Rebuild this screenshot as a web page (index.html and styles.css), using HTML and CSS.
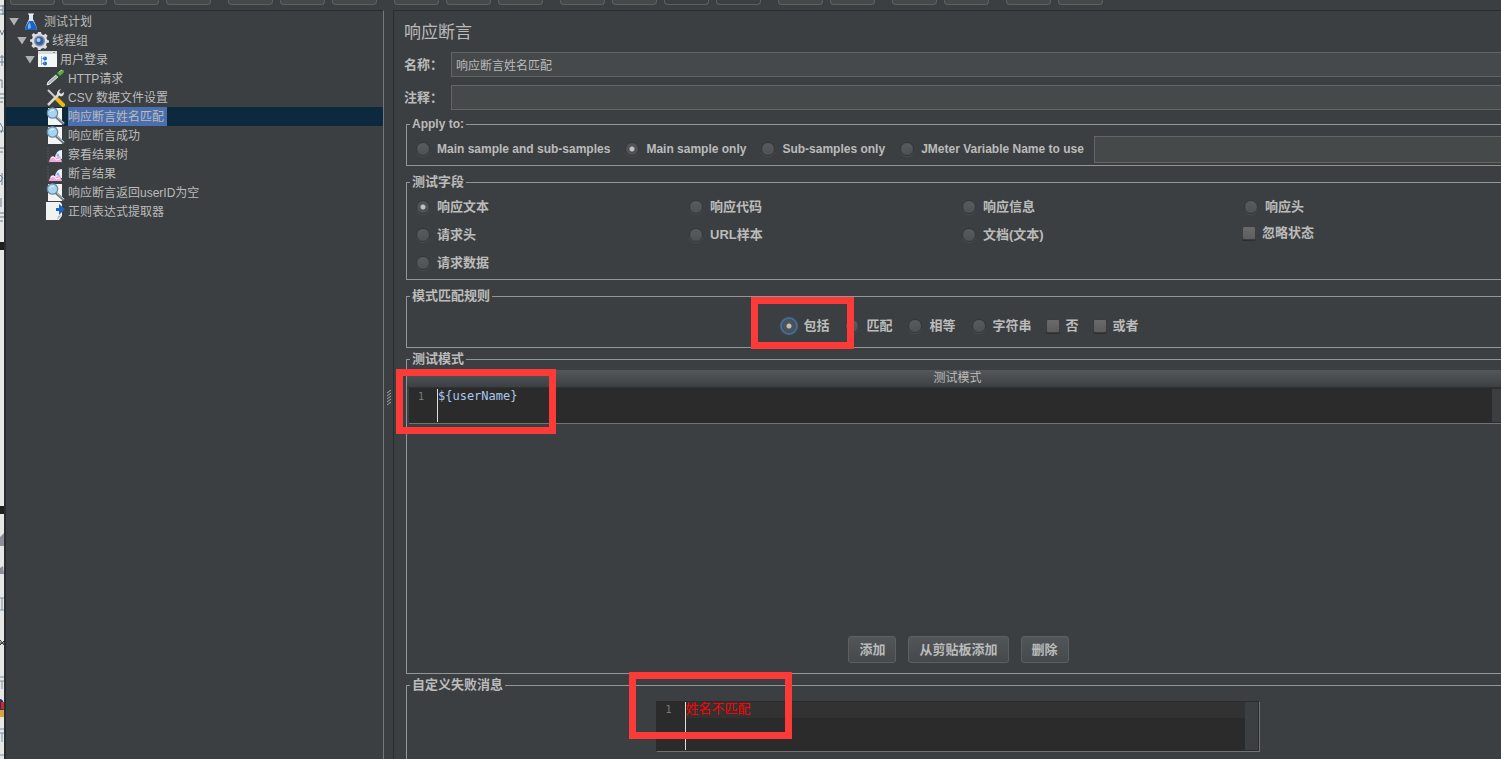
FILE: index.html
```html
<!DOCTYPE html>
<html lang="zh-CN">
<head>
<meta charset="utf-8">
<title>响应断言</title>
<link rel="stylesheet" href="styles.css">
</head>
<body>
<svg class="backdrop" width="4" height="759" viewBox="0 0 4 759" aria-hidden="true">
  <rect width="4" height="759" fill="#e6e6e4"/>
  <g fill="#1f1f1f"><rect y="242" width="4" height="8"/><rect y="506" width="4" height="8"/></g>
  <g stroke="#6a7f96" fill="none"><path d="M0 6h4M0 10h3M0 14h4M3 5v10M0 30l2 5 2-5M0 57h4M0 62h4M2 55v11M0 80h2v8M0 94h4M0 98h4M0 102h3M0 123l3 5-2 5M0 131h4M0 148h4M0 152h3M0 175l3 3-3 4M2 173v12M1 198v9M0 213h4M0 217h4M0 221h3"/></g>
  <g fill="#8c8d99"><path d="M4 533v13H0v-9zM0 568l3-2 1 8H0z"/></g>
  <g stroke="#7793ab" fill="none"><path d="M2 598v12M0 598h4M0 610h4M0 677h4M0 681h4M2 681v8M0 729h4M0 733h4M2 733v9M0 755h4"/></g>
  <path d="M0 640l4 5M0 645l4-4M0 643h4" stroke="#333" fill="none"/>
  <path d="M0 699q4 0 4 8t-4 4z" fill="#26316e"/><path d="M1 702h3v7H1z" fill="#d22c19"/><path d="M0 710h4v7H0z" fill="#d9a43c"/>
</svg>
<div class="app">
  <div class="toolbar">
    <div class="group"><button aria-label="新建"></button><button aria-label="模板"></button><button aria-label="打开"></button><button aria-label="保存"></button></div>
    <div class="group"><button aria-label="剪切"></button><button aria-label="复制"></button><button aria-label="粘贴"></button></div>
    <div class="group"><button aria-label="展开"></button><button aria-label="折叠"></button><button aria-label="切换"></button></div>
    <div class="group"><button aria-label="启动"></button><button aria-label="无间隔启动"></button><button aria-label="停止" disabled></button><button aria-label="关闭" disabled></button></div>
    <div class="group"><button aria-label="清除"></button><button aria-label="清除全部"></button></div>
    <div class="group"><button aria-label="搜索"></button><button aria-label="重置搜索"></button></div>
    <div class="group"><button aria-label="函数助手"></button><button aria-label="帮助"></button></div>
  </div>
  <div class="split">
    <ul class="tree">
      <li class="node level0"><span class="arrow"></span>
        <svg class="icon" viewBox="0 0 20 19"><path d="M7 2h4v5l4 9q0 2-2 2H5q-2 0-2-2l4-9z" fill="#dbe7f3"/><path d="M7 9h4l4 7q0 2-2 2H5q-2 0-2-2z" fill="#1763c6"/><path d="M6 13l2-3 1 6-3 1z" fill="#75b2f1"/><path d="M6 2h6" stroke="#fff"/></svg><span class="name">测试计划</span></li>
      <li class="node level1"><span class="arrow"></span>
        <svg class="icon" viewBox="0 0 20 19"><path d="M8 1h3l.6 2.200 2 .8 2-1.200 2 2-1.200 2 .8 2L19 9.500v2l-2.200.6-.8 2 1.200 2-2 2-2-1.200-2 .8L10.500 19H8l-.6-2.300-2-.8-2 1.200-2-2 1.200-2-.8-2L0 10.500V8.500L2 8l.8-2-1.200-2 2-2 2 1.200 2-.8z" fill="#d9dde1"/><circle cx="9.500" cy="10" r="5.500" fill="#8a9099"/><circle cx="9.500" cy="10" r="4" fill="#2f61ab"/><circle cx="8.500" cy="9" r="2" fill="#a9cdf6"/></svg><span class="name">线程组</span></li>
      <li class="node level2"><span class="arrow"></span>
        <svg class="icon" viewBox="0 0 20 19"><path d="M0 1h19v16H0z" fill="#f4f6f8"/><path d="M0 1h19v3H0z" fill="#d5dadd"/><path d="M15 2h2v1h-2z" fill="#81909b"/><path d="M3.500 6v9M3 8.500h3M3 13.500h3" stroke="#8fb1d2" fill="none"/><circle cx="7" cy="8.500" r="2" fill="#1469ca"/><circle cx="7" cy="13.500" r="2" fill="#1469ca"/><path d="M6 8h1M6 13h1" stroke="#8ec0f0"/></svg><span class="name">用户登录</span></li>
      <li class="node level3">
        <svg class="icon" viewBox="0 0 20 19"><path d="M1 16l1-3 9-8 2 2-9 8z" fill="#aab6b3" stroke="#e2e6e4"/><path d="M10 4l4 4" stroke="#274e24" stroke-width="2"/><path d="M11 4l4-3q3-1 3 2l-4 4z" fill="#5bad43"/><path d="M13 3l3-2" stroke="#a3dd8c"/></svg><span class="name">HTTP请求</span></li>
      <li class="node level3">
        <svg class="icon" viewBox="0 0 20 19"><path d="M2 2l10 10" stroke="#c9cccd" stroke-width="2"/><path d="M11 11l6 6" stroke="#edb90e" stroke-width="4" stroke-linecap="round"/><path d="M2 17L13 6" stroke="#d9d9d2" stroke-width="2.500"/><path d="M15 1l-2 3 2 2 3-2q0 4-3 4.500L11 6q0-4 4-5z" fill="#e2e4e4"/></svg><span class="name">CSV 数据文件设置</span></li>
      <li class="node level3 selected">
        <svg class="icon" viewBox="0 0 20 19"><use href="#lens"/></svg><span class="name">响应断言姓名匹配</span></li>
      <li class="node level3">
        <svg class="icon" viewBox="0 0 20 19"><g id="lens"><path d="M2 1h14v17H2z" fill="#f4f4f2"/><circle cx="6.500" cy="6" r="5.200" fill="#a5d5ef" stroke="#6c8ca5" stroke-width="1.300"/><path d="M4 5q1-2 4-2" stroke="#e9faff" fill="none"/><path d="M10 10l8 7" stroke="#6e7c8a" stroke-width="2.800"/><path d="M11 10l7 6" stroke="#c3cbd4"/></g></svg><span class="name">响应断言成功</span></li>
      <li class="node level3">
        <svg class="icon" viewBox="0 0 20 19"><use href="#chart"/></svg><span class="name">察看结果树</span></li>
      <li class="node level3">
        <svg class="icon" viewBox="0 0 20 19"><g id="chart"><path d="M2 2v15M2 17h14" stroke="#55585b" fill="none" stroke-dasharray="2 1"/><path d="M9 13q1-8 7-8v9z" fill="#e8f3ff"/><path d="M10 11l2-3 2 4" fill="#7fb2ed"/><path d="M3 17q1-6 4-6l3 2 4-2 2 6z" fill="#f3a9da"/><path d="M5 13l3-1 2 3 4-1" stroke="#fff" fill="none"/></g></svg><span class="name">断言结果</span></li>
      <li class="node level3">
        <svg class="icon" viewBox="0 0 20 19"><use href="#lens"/></svg><span class="name">响应断言返回userID为空</span></li>
      <li class="node level3">
        <svg class="icon" viewBox="0 0 20 19"><path d="M0 0h14l2 2v12l-3 4H0z" fill="#f1f2f2"/><path d="M16 13l-4 1-1 4z" fill="#b8bec2"/><path d="M10 6h3V2l6 5-6 6V9h-3z" fill="#1866c4"/></svg><span class="name">正则表达式提取器</span></li>
    </ul>
    <div class="divider">
      <svg width="6" height="17" viewBox="0 0 6 17" aria-hidden="true"><path d="M1 4l4-3M1 7l4-3M1 10l4-3M1 13l4-3M1 16l4-3" stroke="#a6a8a9" fill="none"/></svg>
    </div>
    <main class="panel">
      <form class="form">
        <h1 class="title">响应断言</h1>
        <div class="field"><label for="name">名称：</label><input id="name" type="text" value="响应断言姓名匹配"></div>
        <div class="field"><label for="comment">注释：</label><input id="comment" type="text"></div>

        <fieldset class="box scope">
          <legend>Apply to:</legend>
          <div class="options">
            <label><input type="radio" name="scope">Main sample and sub-samples</label>
            <label><input type="radio" name="scope" checked>Main sample only</label>
            <label><input type="radio" name="scope">Sub-samples only</label>
            <label><input type="radio" name="scope">JMeter Variable Name to use</label>
            <input class="variable" type="text" aria-label="JMeter Variable Name">
          </div>
        </fieldset>

        <fieldset class="box target">
          <legend>测试字段</legend>
          <div class="grid">
            <label><input type="radio" name="target" checked>响应文本</label>
            <label><input type="radio" name="target">响应代码</label>
            <label><input type="radio" name="target">响应信息</label>
            <label class="last"><input type="radio" name="target">响应头</label>
            <label><input type="radio" name="target">请求头</label>
            <label><input type="radio" name="target">URL样本</label>
            <label><input type="radio" name="target">文档(文本)</label>
            <label class="last check"><input type="checkbox">忽略状态</label>
            <label><input type="radio" name="target">请求数据</label>
          </div>
        </fieldset>

        <fieldset class="box rules">
          <legend>模式匹配规则</legend>
          <div class="options centered">
            <label class="marked"><input class="focused" type="radio" name="rule" checked>包括<span class="mark mark-rule"></span></label>
            <label><input type="radio" name="rule">匹配</label>
            <label><input type="radio" name="rule">相等</label>
            <label><input type="radio" name="rule">字符串</label>
            <label class="check"><input type="checkbox">否</label>
            <label class="check"><input type="checkbox">或者</label>
          </div>
        </fieldset>

        <fieldset class="box patterns">
          <legend>测试模式</legend>
          <div class="patterns-body">
            <div class="marked">
              <table class="table">
                <thead><tr><th>测试模式</th></tr></thead>
                <tbody><tr><td>
                  <div class="editor"><span class="line">1</span><textarea class="code" aria-label="测试模式" spellcheck="false">${userName}</textarea><span class="track"></span></div>
                </td></tr></tbody>
              </table>
              <span class="mark mark-pattern"></span>
            </div>
            <div class="buttons">
              <button type="button">添加</button><button type="button">从剪贴板添加</button><button type="button">删除</button>
            </div>
          </div>
        </fieldset>

        <fieldset class="box message">
          <legend>自定义失败消息</legend>
          <div class="editor framed marked"><span class="line">1</span><textarea class="code error" aria-label="自定义失败消息" spellcheck="false">姓名不匹配</textarea><span class="track"></span><span class="mark mark-message"></span></div>
        </fieldset>
      </form>
    </main>
  </div>
</div>
</body>
</html>
```
FILE: styles.css
```css
* { box-sizing: border-box; }

body {
  margin: 0;
  display: flex;
  height: 100vh;
  overflow: hidden;
  background: #3c3f41;
  color: #bbbbbb;
  font: 12px/14px "Liberation Sans", "Noto Sans CJK SC", sans-serif;
}

input, button, textarea { font: inherit; color: inherit; margin: 0; }

.backdrop { flex: none; }

.app {
  flex: 1;
  min-width: 0;
  display: flex;
  flex-direction: column;
  border-left: 2px solid #292c2e;
}

.toolbar {
  flex: none;
  display: flex;
  gap: 17px;
  height: 10px;
  padding: 0 4px 5px;
}
.group { display: flex; gap: 7px; }
.group button {
  width: 45px;
  height: 5px;
  padding: 0;
  border: 1px solid #5e6060;
  border-top: 0;
  border-radius: 0 0 4px 4px;
  background: #45494a;
}
.group button:disabled { background: #3c3f41; }

.split { flex: 1; min-height: 0; display: flex; }

.tree {
  flex: none;
  width: 378px;
  margin: 0;
  padding: 1px 0 0;
  border-top: 1px solid #292c2e;
  border-right: 1px solid #75787a;
  list-style: none;
}
.node { display: flex; align-items: center; height: 19px; }
.level0 { padding-left: 3px; }
.level1 { padding-left: 11px; }
.level2 { padding-left: 19px; }
.level3 { padding-left: 40px; }
.arrow {
  width: 10px;
  height: 8px;
  margin-right: 3px;
  background: #afb1b3;
  clip-path: polygon(0 0, 100% 0, 50% 100%);
}
.icon { flex: none; width: 20px; height: 19px; }
.name { margin-left: 1px; padding: 2px 1px 0; line-height: 17px; white-space: nowrap; }
.level3 .name { margin-left: 2px; padding: 2px 3px 0 0; }
.selected { background: #0d293e; }
.selected .name { background: #4b6eaf; }

.divider { flex: none; width: 9px; display: flex; align-items: center; justify-content: center; padding-top: 26px; }

.panel {
  flex: 1;
  min-width: 0;
  overflow: hidden;
  border-top: 1px solid #292c2e;
  border-left: 1px solid #292c2e;
}
.form {
  display: flex;
  flex-direction: column;
  height: 100%;
  margin-right: -8px;
  padding: 12px 0 0 10px;
}
.title { margin: 0 0 9px; font-size: 17px; line-height: 20px; font-weight: 400; }

.field { display: flex; align-items: center; height: 25px; margin-bottom: 8px; }
.field label { width: 47px; font-size: 13px; font-weight: 700; white-space: nowrap; }
.field input { flex: 1; height: 25px; }
input[type="text"] {
  min-width: 0;
  padding: 0 4px;
  border: 1px solid #646464;
  background: #45494a;
}

.box {
  flex: none;
  min-width: 0;
  margin: 0 0 0 2px;
  padding: 0;
  border: 1px solid #939597;
}
.box legend {
  margin-left: 3px;
  padding: 0 2px;
  font-size: 12px;
  line-height: 14px;
  height: 14px;
  font-weight: 700;
}
.target legend, .rules legend, .patterns legend, .message legend { font-size: 13px; }

.box label { display: flex; align-items: center; gap: 7px; font-size: 13px; font-weight: 700; white-space: nowrap; }
.box label.check { gap: 6px; }

input[type="radio"], input[type="checkbox"] {
  appearance: none;
  flex: none;
  width: 14px;
  height: 14px;
  border: 1px solid #343638;
}
input[type="radio"] {
  border-radius: 50%;
  background: linear-gradient(#585c5e, #4d5153);
  box-shadow: 0 1px 0 #4b4e50;
}
input[type="radio"]:checked { background: radial-gradient(circle, #c0c0c0 0 2px, #4e5254 3px); }
input[type="radio"].focused { border-color: #40536a; box-shadow: 0 0 0 1px #4a6f9b, 0 0 1px 2px #466a94; }
input[type="checkbox"] { border-color: #3a3c3d; border-radius: 2px; background: linear-gradient(#6a6a6a, #5d5d5d); box-shadow: 0 1px 0 #2c2e2f; }

.scope { margin-top: -1px; padding: 5px 0 2px; }
.options { display: flex; align-items: center; gap: 16px; }
.scope .options { padding-left: 9px; gap: 15px; }
.scope label { font-size: 12px; padding-bottom: 2px; }
.variable { flex: 1; height: 27px; margin-left: -5px; }

.target { margin-top: 9px; padding: 4px 0 2px; }
.grid { display: grid; grid-template-columns: repeat(4, 1fr); grid-auto-rows: 28px; padding-left: 9px; }
.grid .last { padding-left: 9px; }
.grid .check { padding: 0 0 4px 7px; }

.rules { margin-top: 9px; padding: 9px 0 7px; }
.centered { justify-content: center; height: 28px; padding-left: 6px; }
.centered .check { margin-left: -2px; }

.patterns { flex: 1; margin-top: 4px; padding-top: 4px; }
.patterns-body { display: flex; flex-direction: column; justify-content: space-between; height: 100%; }
.table { width: 100%; border-collapse: collapse; }
.table th {
  height: 17px;
  padding: 0;
  border-bottom: 1px solid #2f3133;
  background: linear-gradient(#54585a, #3d4042);
  font-weight: 400;
}
.table td { padding: 0 0 0 2px; }

.editor { display: flex; height: 36px; background: #2b2b2b; border-bottom: 1px solid #717375; padding: 1px 0; }
.line {
  flex: none;
  width: 28px;
  padding-right: 13px;
  text-align: right;
  font: 10px/16px "DejaVu Sans Mono", monospace;
  color: #787f78;
}
.code {
  flex: 1;
  min-width: 0;
  padding: 0;
  border: 0;
  border-left: 1px solid #dddddd;
  outline: 0;
  resize: none;
  overflow: hidden;
  background: transparent;
  color: #a9c8f0;
  font: 12px/14px "DejaVu Sans Mono", "Noto Sans CJK SC", monospace;
}
.track { flex: none; width: 16px; background: #3c3f41; }

.buttons { display: flex; justify-content: center; gap: 12px; padding: 0 0 10px 2px; }
.buttons button {
  height: 27px;
  padding: 0 10px;
  border: 1px solid #5e6060;
  border-radius: 3px;
  background: linear-gradient(#525658, #45494b);
  font-size: 13px;
  font-weight: 700;
}

.message { margin-top: 4px; padding: 9px 0 7px; border-bottom: 0; }
.framed { width: 604px; height: 51px; margin: 0 auto; padding: 0 0 1px; border: 1px solid #292b2c; border-right-color: #717375; border-bottom-color: #717375; }
.framed .track { width: 14px; border-right: 1px solid #292b2c; }
.error { color: #ff0000; font-size: 13px; background: linear-gradient(#323232 0 16px, transparent 16px); }

.marked { position: relative; }
.mark { position: absolute; z-index: 2; border: 7px solid #fc3a38; pointer-events: none; }
.mark-rule { left: -31px; top: -22px; width: 103px; height: 52px; }
.mark-pattern { left: -11px; top: -1px; width: 160px; height: 65px; }
.mark-message { left: -28px; top: -30px; width: 163px; height: 67px; }
```
